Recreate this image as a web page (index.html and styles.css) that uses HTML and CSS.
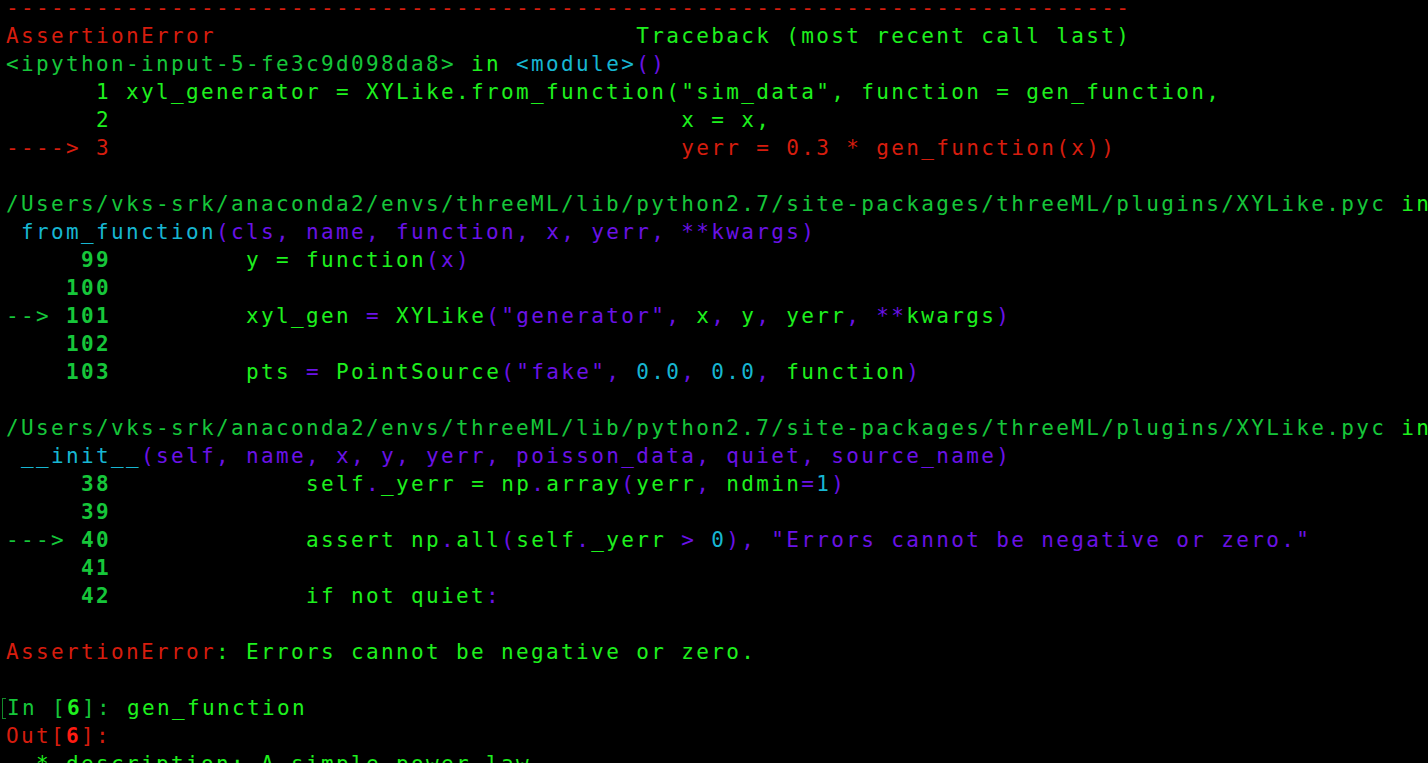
FILE: index.html
```html
<!DOCTYPE html>
<html>
<head>
<meta charset="utf-8">
<title>IPython traceback</title>
<link rel="stylesheet" href="styles.css">
</head>
<body>
<pre class="term"><span class="r">---------------------------------------------------------------------------</span>
<span class="r">AssertionError</span>                            <span class="g">Traceback (most recent call last)</span>
<span class="dg">&lt;ipython-input-5-fe3c9d098da8&gt;</span><span class="g"> in </span><span class="c">&lt;module&gt;</span><span class="p">()</span>
<span class="g">      1 xyl_generator = XYLike.from_function("sim_data", function = gen_function,</span>
<span class="g">      2                                      x = x,</span>
<span class="r">----&gt; 3                                      yerr = 0.3 * gen_function(x))</span>

<span class="dg">/Users/vks-srk/anaconda2/envs/threeML/lib/python2.7/site-packages/threeML/plugins/XYLike.pyc</span><span class="g"> in</span>
 <span class="c">from_function</span><span class="p">(cls, name, function, x, yerr, **kwargs)</span>
<span class="dg b">     99</span><span class="g">         y = function</span><span class="p">(x)</span>
<span class="dg b">    100</span>
<span class="dg">--&gt; </span><span class="dg b">101</span><span class="g">         xyl_gen </span><span class="p">=</span><span class="g"> XYLike</span><span class="p">("generator", </span><span class="g">x</span><span class="p">, </span><span class="g">y</span><span class="p">, </span><span class="g">yerr</span><span class="p">, **</span><span class="g">kwargs</span><span class="p">)</span>
<span class="dg b">    102</span>
<span class="dg b">    103</span><span class="g">         pts </span><span class="p">=</span><span class="g"> PointSource</span><span class="p">("fake", </span><span class="c">0.0</span><span class="p">, </span><span class="c">0.0</span><span class="p">, </span><span class="g">function</span><span class="p">)</span>

<span class="dg">/Users/vks-srk/anaconda2/envs/threeML/lib/python2.7/site-packages/threeML/plugins/XYLike.pyc</span><span class="g"> in</span>
 <span class="c">__init__</span><span class="p">(self, name, x, y, yerr, poisson_data, quiet, source_name)</span>
<span class="dg b">     38</span><span class="g">             self</span><span class="p">.</span><span class="g">_yerr = np</span><span class="p">.</span><span class="g">array</span><span class="p">(</span><span class="g">yerr</span><span class="p">, </span><span class="g">ndmin</span><span class="p">=</span><span class="c">1</span><span class="p">)</span>
<span class="dg b">     39</span>
<span class="dg">---&gt; </span><span class="dg b">40</span><span class="g">             assert np</span><span class="p">.</span><span class="g">all</span><span class="p">(</span><span class="g">self</span><span class="p">.</span><span class="g">_yerr </span><span class="p">&gt; </span><span class="c">0</span><span class="p">), "Errors cannot be negative or zero."</span>
<span class="dg b">     41</span>
<span class="dg b">     42</span><span class="g">             if not quiet</span><span class="p">:</span>

<span class="r">AssertionError</span><span class="g">: Errors cannot be negative or zero.</span>

<span class="cursor"></span><span class="dg">In [</span><span class="g b">6</span><span class="dg">]: </span><span class="g">gen_function</span>
<span class="r">Out[</span><span class="rb b">6</span><span class="r">]:</span>
<span class="g">  * description: A simple power-law</span></pre>
</body>
</html>
```
FILE: styles.css
```css
html, body {
  margin: 0;
  padding: 0;
  background: #000000;
  overflow: hidden;
  height: 100%;
}

.term {
  margin: -6px 0 0 0;
  padding: 0 0 0 6px;
  font-family: "DejaVu Sans Mono", "Liberation Mono", monospace;
  font-size: 21px;
  line-height: 28px;
  letter-spacing: 2.36px;
  white-space: pre;
  color: #1ef01e;
  background: #000000;
}

.r { color: #d61d0e; }
.rb { color: #ff1c12; }
.g { color: #1ef01e; }
.dg { color: #16c63a; }
.c { color: #17b6d2; }
.p { color: #6a12e6; }
.b { font-weight: bold; }

.cursor {
  display: inline-block;
  width: 3px;
  height: 19px;
  margin-left: -4px;
  margin-right: 1px;
  vertical-align: -4px;
  border: 1px solid #138a2a;
  border-right: none;
  letter-spacing: 0;
}
```
